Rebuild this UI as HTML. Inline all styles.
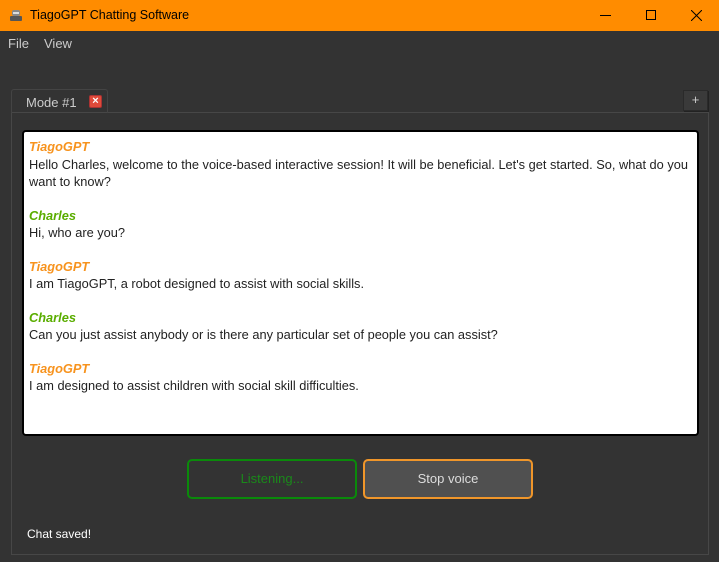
<!DOCTYPE html>
<html><head><style>
*{margin:0;padding:0;box-sizing:border-box}
body{width:719px;height:562px;background:#333;font-family:"Liberation Sans",sans-serif;position:relative;overflow:hidden;color:#ddd}
.title{position:absolute;left:0;top:0;width:719px;height:31px;background:#ff8c00;color:#000;font-size:12.5px}
.title span{position:absolute;left:30px;top:8px}
.menu{position:absolute;top:36px;font-size:13px;color:#ccc}
.tab{position:absolute;left:11px;top:89px;width:97px;height:24px;border:1px solid #444;border-bottom:none;border-radius:3px 3px 0 0;font-size:13px;color:#ccc}
.pane{position:absolute;left:11px;top:112px;width:698px;height:443px;border:1px solid #474747}
.box{position:absolute;left:22px;top:130px;width:677px;height:306px;background:#fff;border:2px solid #000;border-radius:4px;padding:6px 5px;font-size:12.8px;line-height:17.5px;color:#222}
.box p{margin-bottom:16px}
.n{font-weight:bold;font-style:italic}
.o{color:#f7931e}.g{color:#5aad00}
.btn{position:absolute;top:459px;height:40px;border-radius:5px;border:2px solid;font-size:13px;text-align:center;line-height:36px}
</style></head><body>
<div class="title">
<svg style="position:absolute;left:8px;top:7px" width="16" height="16"><rect x="2" y="9" width="12" height="5" rx="1" fill="#555"/><rect x="4" y="3" width="8" height="6" rx="2" fill="#888"/><rect x="5" y="5" width="6" height="2" fill="#ddd"/></svg>
<span>TiagoGPT Chatting Software</span>
<div style="position:absolute;left:600px;top:15px;width:11px;height:1px;background:#000"></div>
<div style="position:absolute;left:646px;top:10px;width:10px;height:10px;border:1px solid #000"></div>
<svg style="position:absolute;left:691px;top:10px" width="11" height="11"><path d="M0 0L11 11M11 0L0 11" stroke="#000" stroke-width="1"/></svg>
</div>
<div class="menu" style="left:8px">File</div>
<div class="menu" style="left:44px">View</div>
<div class="pane"></div>
<div class="tab"><span style="position:absolute;left:14px;top:5px">Mode #1</span>
<div style="position:absolute;left:77px;top:5px;width:13px;height:13px;background:#e04a3a;border:1px solid #a33;border-radius:2px;color:#fff;font-size:11px;line-height:11px;text-align:center;font-weight:bold">×</div></div>
<div style="position:absolute;left:683px;top:90px;width:25px;height:21px;background:#3a3a3a;border:1px solid #2a2a2a;box-shadow:1px 1px 0 #222;color:#ccc;font-size:13px;text-align:center;line-height:18px">+</div>
<div class="box">
<p><span class="n o">TiagoGPT</span><br>Hello Charles, welcome to the voice-based interactive session! It will be beneficial. Let's get started. So, what do you want to know?</p>
<p><span class="n g">Charles</span><br>Hi, who are you?</p>
<p><span class="n o">TiagoGPT</span><br>I am TiagoGPT, a robot designed to assist with social skills.</p>
<p><span class="n g">Charles</span><br>Can you just assist anybody or is there any particular set of people you can assist?</p>
<p><span class="n o">TiagoGPT</span><br>I am designed to assist children with social skill difficulties.</p>
</div>
<div class="btn" style="left:187px;width:170px;border-color:#0a8a0a;color:#1a8a1a;background:#333">Listening...</div>
<div class="btn" style="left:363px;width:170px;border-color:#f0962a;color:#ddd;background:#505050">Stop voice</div>
<div style="position:absolute;left:27px;top:527px;font-size:12px;color:#fff">Chat saved!</div>
</body></html>
